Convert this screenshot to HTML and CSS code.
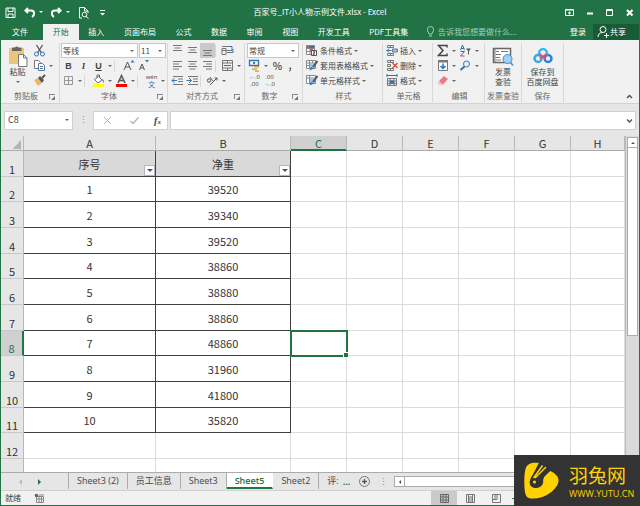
FILE: index.html
```html
<!DOCTYPE html>
<html lang="zh-CN">
<head>
<meta charset="utf-8">
<title>百家号_IT小人物示例文件.xlsx - Excel</title>
<link rel="stylesheet" href="styles.css">
</head>
<body>
<header class="titlebar">
  <div class="quick">
    <button aria-label="保存"><svg class="ic" viewBox="0 0 15 15"><path d="M3 3h9v9.500H3zM5 3v3.500h5V3M5 12.500V9h5v3.500" class="w"/></svg></button>
    <button aria-label="撤消"><svg class="ic" viewBox="0 0 15 15"><path d="M6 3 3.500 5.500 6 8M3.500 5.500h5.500c4 0 4 4.500 1 6.500" class="w b"/></svg><i class="arr"></i></button>
    <button aria-label="恢复"><svg class="ic" viewBox="0 0 15 15"><path d="M9 3l2.500 2.500L9 8M11.500 5.500H6c-4 0-4 4.500-1 6.500" class="w b"/></svg><i class="arr"></i></button>
    <button aria-label="打印预览"><svg class="ic" viewBox="0 0 15 15"><path d="M6 13H3.500V2.500h5L12 6v2M8.500 2.500V6H12M10 11.500l2.500 2" class="w"/><circle cx="8.500" cy="9.500" r="2.300" class="w"/></svg></button>
    <button aria-label="自定义"><svg class="ic" viewBox="0 0 15 15"><path d="M5 5.500h5" class="w"/><path d="M5 8h5L7.500 10.500z" fill="#fff"/></svg></button>
  </div>
  <h1>百家号_IT小人物示例文件.xlsx - Excel</h1>
  <div class="winbtns">
    <button aria-label="功能区选项"><svg class="ic" viewBox="0 0 15 15"><path d="M3.500 4.500h8v6h-8zM3.500 5h8M7.500 9.500v-3M6 8h3" class="w"/></svg></button>
    <button aria-label="最小化"><svg class="ic" viewBox="0 0 15 15"><path d="M5 8.500h6" class="w b"/></svg></button>
    <button aria-label="最大化"><svg class="ic" viewBox="0 0 15 15"><path d="M4.500 4.500h6v6h-6zM4.500 5.500h6" class="w"/></svg></button>
    <button aria-label="关闭"><svg class="ic" viewBox="0 0 15 15"><path d="M5 5l5.500 5.500M10.500 5 5 10.500" class="w b"/></svg></button>
  </div>
</header>

<div class="tabs">
  <a href="#" class="file">文件</a>
  <nav>
    <a href="#" class="on">开始</a><a href="#">插入</a><a href="#">页面布局</a><a href="#">公式</a><a href="#">数据</a><a href="#">审阅</a><a href="#">视图</a><a href="#">开发工具</a><a href="#">PDF工具集</a>
  </nav>
  <label class="tell"><svg class="ic" viewBox="0 0 15 15"><path d="M6 10C6 8.500 4.500 8 4.500 5.500a3 3 0 0 1 6 0C10.500 8 9 8.500 9 10zM6 12h3" stroke="#a9cdb8" fill="none"/></svg><input type="text" placeholder="告诉我您想要做什么..."></label>
  <a href="#" class="login">登录</a>
  <button class="share"><svg class="ic" viewBox="0 0 15 15"><circle cx="8" cy="5.500" r="3" class="w"/><path d="M3 13c0-3 2-4.500 4.500-4.500M11.500 9v5M9 11.500h5" class="w"/></svg>共享</button>
</div>

<main class="ribbon">
  <section class="group clip">
    <div class="body">
      <button class="big"><svg width="20" height="22" viewBox="0 0 20 22"><path d="M1 3h15v16H1z" fill="#ecc57c"/><path d="M4 2.500h3a2 2 0 0 1 3.500 0h3V6H4z" fill="#666"/><path d="M10.500 9.500h5l3.500 3.500v8.500h-8.500zM15.500 9.500V13H19" fill="#fff" stroke="#777"/></svg><span>粘贴</span><i class="arr"></i></button>
      <div class="rows">
        <div><button class="t" aria-label="剪切"><svg class="ic" viewBox="0 0 15 15"><path d="M4.500 2l5 8M10.500 2l-5 8" stroke="#555" stroke-width="1.300" fill="none"/><circle cx="4.500" cy="11" r="2" class="bl"/><circle cx="10.500" cy="11" r="2" class="bl"/></svg></button></div>
        <div><button class="t" aria-label="复制"><svg class="ic" viewBox="0 0 15 15"><path d="M2.500 2.500h4l2 2v6h-6z" fill="#fff" stroke="#777"/><path d="M6.500 5.500h4l2 2v5h-6zM8 8.500h3M8 10.500h3" fill="#fff" stroke="#57799e"/></svg></button><i class="arr"></i></div>
        <div><button class="t" aria-label="格式刷"><svg class="ic" viewBox="0 0 15 15"><path d="M2 7l4-2 4 5-4 3z" fill="#ecb766"/><path d="M6 5l2-2 4 4-2 3z" fill="#555"/><path d="M10 5l3-3" stroke="#555" stroke-width="2"/></svg></button></div>
      </div>
    </div>
    <footer><span>剪贴板</span><button class="launch" aria-label="剪贴板设置"></button></footer>
  </section>

  <section class="group font">
    <div class="rows">
      <div class="selects"><span class="sel name"><select aria-label="字体"><option>等线</option></select></span><span class="sel size"><select aria-label="字号"><option>11</option></select></span></div>
      <div><button class="t"><b>B</b></button><button class="t"><em>I</em></button><button class="t"><u>U</u></button><i class="arr"></i><i class="sep"></i>
        <button class="t" aria-label="增大字号"><svg class="ic" viewBox="0 0 15 15"><path d="M3 12 6.500 4 10 12M4 9h5" class="g"/><path d="M9.500 4.500h4l-2-2.500z" fill="#2e75b6"/></svg></button><button class="t" aria-label="减小字号"><svg class="ic" viewBox="0 0 15 15"><path d="M3.500 12 6 6l2.500 6M4.500 10h3" class="g"/><path d="M9 2h4l-2 2.500z" fill="#2e75b6"/></svg></button></div>
      <div><button class="t" aria-label="边框"><svg class="ic" viewBox="0 0 15 15"><path d="M3.500 3.500h8v8h-8zM7.500 3.500v8M3.500 7.500h8" stroke="#999" fill="none"/></svg></button><i class="arr"></i><i class="sep"></i>
        <button class="t" aria-label="填充颜色"><svg class="ic" viewBox="0 0 15 15"><path d="M3.500 6.500l4-3 3.500 3.500-4 3zM6 5V2h2.500v3" fill="#fff" stroke="#666"/><path d="M11 6c2.500 1 2 3 1.500 4z" fill="#2e75b6"/><path d="M2 11h11v3H2z" fill="#ff0"/></svg></button><i class="arr"></i><button class="t" aria-label="字体颜色"><svg class="ic" viewBox="0 0 15 15"><path d="M4 10 7.500 2.500 11 10M5 7.500h5" class="g thick"/><path d="M2 11h11v3H2z" fill="red"/></svg></button><i class="arr"></i><i class="sep"></i>
        <button class="t pinyin"><span>wén</span><span>文</span></button><i class="arr"></i></div>
    </div>
    <footer><span>字体</span><button class="launch" aria-label="字体设置"></button></footer>
  </section>

  <section class="group align">
    <div class="rows">
      <div><button class="t" aria-label="顶端对齐"><svg class="ic" viewBox="0 0 15 15"><path d="M3 2.500h9M4.500 5h6M3 7.500h9" class="l"/></svg></button><button class="t" aria-label="垂直居中"><svg class="ic" viewBox="0 0 15 15"><path d="M3 4.500h9M4.500 7h6M3 9.500h9" class="l"/></svg></button><button class="t pressed" aria-label="底端对齐"><svg class="ic" viewBox="0 0 15 15"><path d="M3 7.500h9M4.500 10h6M3 12.500h9" class="l"/></svg></button><i class="sep"></i><button class="t" aria-label="自动换行"><svg class="ic" viewBox="0 0 15 15"><path d="M2 3.500h7M2 7.500h10M2 5.500h4v6H2zM7 9.500h3" stroke="#777" fill="none"/><path d="M9 3.500h3v4M10 9.500h3V6" class="bl"/></svg></button></div>
      <div><button class="t" aria-label="左对齐"><svg class="ic" viewBox="0 0 15 15"><path d="M3 3.500h9M3 6h6M3 8.500h9M3 11h6" class="l"/></svg></button><button class="t" aria-label="居中"><svg class="ic" viewBox="0 0 15 15"><path d="M3 3.500h9M4.500 6h6M3 8.500h9M4.500 11h6" class="l"/></svg></button><button class="t" aria-label="右对齐"><svg class="ic" viewBox="0 0 15 15"><path d="M3 3.500h9M6 6h6M3 8.500h9M6 11h6" class="l"/></svg></button><i class="sep"></i><button class="t" aria-label="合并后居中"><svg class="ic" viewBox="0 0 15 15"><path d="M2.500 2.500h10v10h-10zM2.500 5h10M2.500 10h10M7.500 2.500V5M7.500 10v2.500" stroke="#777" fill="none"/><path d="M4 7.500h7" class="bl"/></svg></button><i class="arr"></i></div>
      <div><button class="t" aria-label="减少缩进"><svg class="ic" viewBox="0 0 15 15"><path d="M3 3.500h10M8 6h5M8 8.500h5M3 11.500h10" class="l"/><path d="M7 7.500H2M4.500 5 2 7.500 4.500 10" class="bl"/></svg></button><button class="t" aria-label="增加缩进"><svg class="ic" viewBox="0 0 15 15"><path d="M3 3.500h10M8 6h5M8 8.500h5M3 11.500h10" class="l"/><path d="M1.500 7.500h5M4 5l2.500 2.500L4 10" class="bl"/></svg></button><i class="sep"></i><button class="t" aria-label="方向"><svg class="ic" viewBox="0 0 15 15"><path d="M5 12l7-7M9.500 5H12v2.500" class="g"/><circle cx="4" cy="7.500" r="1.700" class="g"/><path d="M5 4l3 4" class="g"/></svg></button><i class="arr"></i></div>
    </div>
    <footer><span>对齐方式</span><button class="launch" aria-label="对齐设置"></button></footer>
  </section>

  <section class="group number">
    <div class="rows">
      <div class="selects"><span class="sel fmt"><select aria-label="数字格式"><option>常规</option></select></span></div>
      <div><button class="t" aria-label="会计格式"><svg class="ic" viewBox="0 0 15 15"><path d="M2.500 2.500h9v5h-9z" fill="#fff" stroke="#2e75b6" stroke-width="1.300"/><circle cx="7" cy="5" r="1.200" fill="#2e75b6"/><path d="M7 8h5v1.500H7zM5 10.500h5V12H5zM8 12.500h4V14H8z" fill="#e8a33d"/></svg></button><i class="arr"></i><button class="t pct">%</button><button class="t pct">，</button></div>
      <div><button class="t dec"><span><b>←</b>.0</span><span>.00</span></button><button class="t dec"><span>.00</span><span><b>→</b>.0</span></button></div>
    </div>
    <footer><span>数字</span><button class="launch" aria-label="数字设置"></button></footer>
  </section>

  <section class="group style">
    <div class="rows">
      <button class="row"><svg class="ic" viewBox="0 0 15 15"><path d="M1.500 2.500h8v9h-8zM1.500 5.500h8M1.500 8.500h8M5 2.500v9" fill="#fff" stroke="#888"/><path d="M2 3h3v2H2zM5 6h3v2H5z" fill="#d9532c"/><path d="M5 3h4v2H5z" fill="#2e75b6"/><path d="M6.500 7.500h5v5h-5zM8 9h2M8 11h2M10 8l-2 4" fill="#fff" stroke="#555"/></svg>条件格式<i class="arr"></i></button>
      <button class="row"><svg class="ic" viewBox="0 0 15 15"><path d="M1.500 2.500h9v8h-9zM1.500 5h9M1.500 7.500h9M4.500 2.500v8M7.500 2.500v8" fill="#fff" stroke="#888"/><path d="M5 5h5v5H5z" fill="#9dc3e6"/><path d="M12.500 3 8 9" stroke="#555" stroke-width="2"/><path d="M4.500 12.500 6 9l3 1.500z" fill="#2e75b6"/></svg>套用表格格式<i class="arr"></i></button>
      <button class="row"><svg class="ic" viewBox="0 0 15 15"><path d="M1.500 2.500h9v8h-9zM1.500 5h9M4.500 2.500v8" fill="#fff" stroke="#888"/><path d="M5 5.500h5v4.500H5z" fill="#9dc3e6"/><path d="M12.500 3 8 9" stroke="#555" stroke-width="2"/><path d="M4.500 12.500 6 9l3 1.500z" fill="#2e75b6"/></svg>单元格样式<i class="arr"></i></button>
    </div>
    <footer><span>样式</span></footer>
  </section>

  <section class="group cells">
    <div class="rows">
      <button class="row"><svg class="ic" viewBox="0 0 15 15"><path d="M2.500 2.500h6v2h-6zM2.500 10.500h6v2h-6zM5.500 2.500v2M5.500 10.500v2" stroke="#777" fill="none"/><path d="M7.500 6h5v3h-5z" fill="#9dc3e6" stroke="#777"/><path d="M6.500 7.500h-5M4 5.500 2 7.500l2 2" class="bl"/></svg>插入<i class="arr"></i></button>
      <button class="row"><svg class="ic" viewBox="0 0 15 15"><path d="M2.500 2.500h6v2h-6zM2.500 10.500h6v2h-6zM2.500 6.500h3v2h-3zM5.500 2.500v2M5.500 10.500v2" stroke="#777" fill="none"/><path d="M7.500 5l5 5M12.500 5l-5 5" stroke="#e0492f" stroke-width="1.400"/></svg>删除<i class="arr"></i></button>
      <button class="row"><svg class="ic" viewBox="0 0 15 15"><path d="M2 2.500h10M2 1v3M12 1v3" class="bl"/><path d="M2.500 5.500h9v7h-9zM2.500 8h9M2.500 10.500h9M5 5.500v7M9 5.500v7" stroke="#777" fill="none"/><path d="M5 7.500h4V11H5z" fill="#2e75b6"/></svg>格式<i class="arr"></i></button>
    </div>
    <footer><span>单元格</span></footer>
  </section>

  <section class="group edit">
    <div class="rows">
      <div><button class="t" aria-label="自动求和"><svg class="ic" viewBox="0 0 15 15"><path d="M12 4.500v-2H3.500L8 7.500l-4.500 5H12v-2" stroke="#444" stroke-width="1.500" fill="none"/></svg></button><i class="arr"></i><button class="t" aria-label="排序和筛选"><svg class="ic" viewBox="0 0 15 15"><path d="M2.500 7 4.500 2l2 5M3 5.500h3" class="bl"/><path d="M2.500 8.500h4l-4 4.500h4" stroke="#8e44ad" fill="none"/><path d="M8 5.500h5L11 8v3.500H10V8z" fill="#555"/></svg></button><i class="arr"></i></div>
      <div><button class="t" aria-label="填充"><svg class="ic" viewBox="0 0 15 15"><path d="M3.500 2.500h9v10h-9z" fill="#fff" stroke="#777"/><path d="M3 2h10v2.500H3z" fill="#777"/><path d="M8 5.500v5M5.500 8 8 10.500 10.500 8" class="bl thick"/></svg></button><i class="arr"></i><button class="t" aria-label="查找和选择"><svg class="ic" viewBox="0 0 15 15"><circle cx="8.500" cy="6" r="3" class="bl"/><path d="M6.500 8.500 2.500 12" class="bl b"/></svg></button><i class="arr"></i></div>
      <div><button class="t" aria-label="清除"><svg class="ic" viewBox="0 0 15 15"><path d="M4 8l5-5 4 3-5 5.500H5.500z" fill="#e8788a"/><path d="M4 8l3.500 3-1 1H4L2.500 10z" fill="#f6c3cb"/></svg></button><i class="arr"></i></div>
    </div>
    <footer><span>编辑</span></footer>
  </section>

  <section class="group invoice">
    <button class="big"><svg width="22" height="22" viewBox="0 0 22 22"><path d="M1.500 3.500h17v14h-17z" fill="#fff" stroke="#666" stroke-width="1.500"/><path d="M4 6.500h3M9 6.500h7M4 9.500h5M4 12.500h4M4 15h5M3 3v15" stroke="#777"/><circle cx="15.500" cy="14" r="4.500" fill="#9fd0f5" stroke="#4a90c8"/><path d="M18.500 17.500 21 20.500" stroke="#4a90c8" stroke-width="1.500"/></svg><span>发票<br>查验</span></button>
    <footer><span>发票查验</span></footer>
  </section>
  <section class="group save">
    <button class="big"><svg width="22" height="22" viewBox="0 0 22 22"><g fill="none" stroke-width="2.500"><circle cx="6" cy="13.500" r="3.500" stroke="#38a7e8"/><circle cx="16" cy="13.500" r="3.500" stroke="#2d7fe0"/><path d="M7.500 10a4 4 0 1 1 7 0" stroke="#38b6e8"/><path d="M8 8.500c0 3 3 2 6 5M14 8.500c0 3-3 2-6 5" stroke="#ec4a63" stroke-width="2"/></g></svg><span>保存到<br>百度网盘</span></button>
    <footer><span>保存</span></footer>
  </section>
  <button class="collapse" aria-label="折叠功能区"><svg class="ic" viewBox="0 0 15 15"><path d="M5 9l2.500-2.500L10 9" class="g thick"/></svg></button>
</main>

<div class="formula">
  <span class="sel namebox"><select aria-label="名称框"><option>C8</option></select></span>
  <span class="dots">⋮</span>
  <div class="fx">
    <button aria-label="取消"><svg class="ic" viewBox="0 0 15 15"><path d="M4 4l7 7M11 4l-7 7" stroke="#b5b5b5" fill="none"/></svg></button>
    <button aria-label="输入"><svg class="ic" viewBox="0 0 15 15"><path d="M3.500 8 6 10.500 11.500 4.500" stroke="#b5b5b5" stroke-width="1.400" fill="none"/></svg></button>
    <button aria-label="插入函数"><em>f<small>x</small></em></button>
  </div>
  <label class="entry"><input type="text" aria-label="编辑栏"><svg class="ic" viewBox="0 0 15 15"><path d="M5 6.500 7.500 9 10 6.500" stroke="#555" stroke-width="1.500" fill="none"/></svg></label>
</div>

<div class="sheet">
  <div class="grid">
    <table>
      <colgroup><col class="c0"><col class="ca"><col class="cb"><col class="cn"><col class="cn"><col class="cn"><col class="cn"><col class="cn"><col></colgroup>
      <thead><tr><th class="corner"></th><th>A</th><th>B</th><th class="on">C</th><th>D</th><th>E</th><th>F</th><th>G</th><th>H</th></tr></thead>
      <tbody>
        <tr class="head"><th>1</th><td class="d">序号<button class="filter" aria-label="筛选序号"></button></td><td class="d">净重<button class="filter" aria-label="筛选净重"></button></td><td></td><td></td><td></td><td></td><td></td><td></td></tr>
        <tr><th>2</th><td class="d">1</td><td class="d">39520</td><td></td><td></td><td></td><td></td><td></td><td></td></tr>
        <tr><th>3</th><td class="d">2</td><td class="d">39340</td><td></td><td></td><td></td><td></td><td></td><td></td></tr>
        <tr><th>4</th><td class="d">3</td><td class="d">39520</td><td></td><td></td><td></td><td></td><td></td><td></td></tr>
        <tr><th>5</th><td class="d">4</td><td class="d">38860</td><td></td><td></td><td></td><td></td><td></td><td></td></tr>
        <tr><th>6</th><td class="d">5</td><td class="d">38880</td><td></td><td></td><td></td><td></td><td></td><td></td></tr>
        <tr><th>7</th><td class="d">6</td><td class="d">38860</td><td></td><td></td><td></td><td></td><td></td><td></td></tr>
        <tr><th class="on">8</th><td class="d">7</td><td class="d">48860</td><td class="active"><i></i></td><td></td><td></td><td></td><td></td><td></td></tr>
        <tr><th>9</th><td class="d">8</td><td class="d">31960</td><td></td><td></td><td></td><td></td><td></td><td></td></tr>
        <tr><th>10</th><td class="d">9</td><td class="d">41800</td><td></td><td></td><td></td><td></td><td></td><td></td></tr>
        <tr><th>11</th><td class="d">10</td><td class="d">35820</td><td></td><td></td><td></td><td></td><td></td><td></td></tr>
        <tr><th>12</th><td></td><td></td><td></td><td></td><td></td><td></td><td></td><td></td></tr>
        <tr><th></th><td></td><td></td><td></td><td></td><td></td><td></td><td></td><td></td></tr>
      </tbody>
    </table>
  </div>
  <div class="vscroll"><button class="up" aria-label="向上滚动"></button><div class="thumb"></div></div>
</div>

<div class="sheettabs">
  <button class="prev" aria-label="上一个"></button><button class="next" aria-label="下一个"></button>
  <nav><a href="#">Sheet3 (2)</a><a href="#">员工信息</a><a href="#">Sheet3</a><a href="#" class="on">Sheet5</a><a href="#">Sheet2</a><a href="#" class="last">评:</a></nav>
  <span class="more">...</span>
  <button class="add" aria-label="新工作表"><svg class="ic" viewBox="0 0 15 15"><circle cx="7.500" cy="7.500" r="5" stroke="#777" fill="none"/><path d="M7.500 5v5M5 7.500h5" stroke="#555" stroke-width="1.300"/></svg></button>
  <span class="dots">⋮</span>
  <div class="hscroll"><button aria-label="向左滚动"></button><div></div></div>
</div>
<footer class="status">
  <span>就绪</span>
  <button aria-label="录制宏"><svg class="ic" viewBox="0 0 15 15"><path d="M4.500 5.500h7v6h-7zM4.500 8h7M7 5.500v6M9.500 5.500v6M7 4h5" stroke="#888" fill="none"/><circle cx="4.500" cy="4.500" r="1.800" fill="#666"/></svg></button>
  <div class="views">
    <button class="on" aria-label="普通"><svg class="ic" viewBox="0 0 15 15"><path d="M3.500 3.500h8v8h-8zM3.500 6h8M3.500 9h8M6 3.500v8M9 3.500v8" stroke="#666" fill="none"/></svg></button>
    <button aria-label="页面布局"><svg class="ic" viewBox="0 0 15 15"><path d="M3.500 3.500h8v8h-8zM5.500 4v7M9.500 4v7M6 6h3M6 8h3M6 10h3" stroke="#777" fill="none"/></svg></button>
    <button aria-label="分页预览"><svg class="ic" viewBox="0 0 15 15"><path d="M3.500 3.500h8v8h-8zM3.500 8.500H8v-5M6 4v4" stroke="#777" fill="none"/></svg></button>
    <button aria-label="缩小"><svg class="ic" viewBox="0 0 15 15"><path d="M3 7.500h5" class="g"/></svg></button>
  </div>
</footer>

<aside class="brand">
  <svg width="36" height="38" viewBox="0 0 36 38"><path d="M15 1C9 0 3 1 1.500 7 0 13 0 22 1 30c1 6 4 7 9 6.500C19 36 27 32 32 25c4-5 3-10-1-13-2-2-3-2-5-3l-4 4c-4 3-2 6-4 9-2 4-8 5-11 2-3-4 0-9 3-12z" fill="#ffd200"/><path d="M15 1 8 14 6 19c-1 4 2 7 6 7 5 0 8-4 7-8 0-3 2-5 7-9L23 3z" fill="#333"/><path d="M18.500 3.500 9.500 16M22 5 11 16" stroke="#ffd200" stroke-width="1.500"/><circle cx="10.500" cy="20" r="1.600" fill="#ffd200"/></svg>
  <div><strong>羽兔网</strong><span>WWW.YUTU.CN</span></div>
</aside>
</body>
</html>
```
FILE: styles.css
```css
* { box-sizing: border-box; }
body {
  margin: 0;
  height: 100vh;
  display: flex;
  flex-direction: column;
  overflow: hidden;
  border: 1px solid #217346;
  border-top: 0;
  background: #e6e6e6;
  color: #444;
  font: 8px/10px "Noto Sans CJK SC", sans-serif;
}
button, select, input { font: inherit; color: inherit; background: none; border: 0; padding: 0; margin: 0; outline: 0; }
a { color: inherit; text-decoration: none; }
i { font-style: normal; }
.ic { width: 15px; height: 15px; display: block; flex: none; }
.w { fill: none; stroke: #fff; stroke-width: 1; }
.g { fill: none; stroke: #555; stroke-width: 1; }
.l { fill: none; stroke: #777; stroke-width: 1; }
.bl { fill: none; stroke: #2e75b6; stroke-width: 1; }
.b { stroke-width: 2; }
.thick { stroke-width: 1.5; }
.arr { width: 8px; flex: none; display: flex; justify-content: center; }
.arr::before, .sel::after { content: ""; border: 2px solid transparent; border-top-color: #666; border-bottom: 0; }

.titlebar { height: 24px; flex: none; background: #217346; color: #fff; display: grid; grid-template-columns: 1fr auto 1fr; align-items: center; }
.titlebar h1 { margin: 0; font-size: 8px; font-weight: 400; }
.titlebar button { display: flex; align-items: center; }
.titlebar .arr::before { border-top-color: #fff; }
.quick { display: flex; gap: 4px; padding-left: 2px; }
.winbtns { display: flex; justify-content: flex-end; gap: 5px; padding-right: 2px; }

.tabs { height: 16px; flex: none; background: #217346; color: #fff; display: flex; align-items: stretch; line-height: 15px; }
.tabs .file { width: 42px; padding-left: 11px; }
.tabs nav { display: flex; width: 375px; }
.tabs nav a { flex: 1 0 auto; padding: 0 9px; text-align: center; white-space: nowrap; }
.tabs nav .on { background: #f1f1f1; color: #217346; }
.tell { display: flex; flex: 1; min-width: 0; padding-left: 5px; color: #a9cdb8; }
.tell input { flex: 1; min-width: 0; height: 15px; }
.tell input::placeholder { color: #a9cdb8; opacity: 1; }
.login { padding: 0 7px; }
.share { display: flex; width: 46px; background: #185c37; padding-left: 2px; }

.ribbon { height: 64px; flex: none; display: flex; background: #f1f1f1; border-bottom: 1px solid #d2d2d2; padding: 3px 0 1px; position: relative; }
.group { flex: none; display: flex; flex-direction: column; justify-content: space-between; border-right: 1px solid #d8d8d8; padding-left: 2px; }
.group footer { display: flex; height: 12px; align-items: center; color: #666; white-space: nowrap; }
.group footer span { flex: 1; text-align: center; }
.clip { width: 59px; }
.font { width: 108px; padding-left: 1px; }
.align { width: 77px; }
.number { width: 58px; }
.style { width: 80px; }
.cells { width: 50px; }
.edit { width: 52px; }
.invoice { width: 37px; padding: 0; }
.save { width: 42px; padding: 0; }
.body { display: flex; }
.rows > * { display: flex; height: 15px; align-items: center; white-space: nowrap; }
.t { width: 15px; height: 15px; flex: none; display: flex; align-items: center; justify-content: center; font-size: 9px; }
.t b, .t em, .t u { font: bold 9px "Liberation Sans", sans-serif; }
.t em { font-family: "Liberation Serif", serif; font-style: italic; }
.pressed { background: #cacaca; }
.sep { width: 5px; height: 12px; border-left: 1px solid #d8d8d8; }
.font .sep { width: 7px; }
.pct { font-size: 10px; font-weight: 500; }
.pinyin, .dec { flex-direction: column; font: 6px/7px "Open Sans", "Noto Sans CJK SC", sans-serif; }
.pinyin span:last-child { color: #2e75b6; font-size: 7px; }
.dec b { font-size: 6px; line-height: 6px; color: #2e75b6; }
.big { width: 100%; display: flex; flex-direction: column; align-items: center; padding-top: 2px; }
.clip .big { width: 29px; }
.clip .arr { margin-top: 4px; }
.clip .rows .arr { margin-top: 0; }
.launch { width: 6px; height: 5px; margin-right: 4px; border: 1px solid #888; border-right: 0; border-bottom: 0; position: relative; }
.launch::after { content: ""; position: absolute; right: 0; bottom: -1px; border: 2px solid transparent; border-right-color: #777; border-bottom-color: #777; }
.collapse { position: absolute; right: 2px; bottom: -1px; }
.sel { position: relative; display: flex; background: #fff; border: 1px solid #c6c6c6; height: 15px; }
.sel select { appearance: none; width: 100%; padding-left: 1px; }
.sel::after { position: absolute; right: 3px; top: 6px; pointer-events: none; }
.selects { gap: 1px; }
.name { width: 77px; }
.size { width: 27px; }
.fmt { width: 52px; }

.formula { height: 32px; flex: none; display: flex; align-items: center; padding: 0 3px; }
.formula > .sel, .fx, .entry { height: 19px; background: #fff; border: 1px solid #d0d0d0; }
.namebox { width: 69px; font-size: 9px; }
.formula .sel select { padding-left: 3px; }
.formula .sel::after { top: 7px; }
.dots { width: 20px; text-align: center; font-size: 9px; color: #888; }
.fx { width: 75px; display: flex; align-items: center; justify-content: space-around; margin-right: 2px; }
.fx em { font: italic bold 10px "Liberation Serif", serif; }
.fx small { font-size: 7px; }
.entry { flex: 1; display: flex; align-items: center; }
.entry input { flex: 1; min-width: 0; }
.entry .ic { margin-right: -2px; }

.sheet { flex: 1; min-height: 0; display: flex; overflow: hidden; }
.grid { flex: 1; overflow: hidden; background: #fff; border-right: 1px solid #bbb; }
table { width: 100%; table-layout: fixed; border-collapse: separate; border-spacing: 0; font-size: 11px; line-height: 14px; color: #333; }
.c0 { width: 23px; }
.ca { width: 132px; }
.cb { width: 135px; }
.cn { width: 56px; }
th { padding: 0; font-weight: 400; background: #e6e6e6; border-right: 1px solid #b8b8b8; border-bottom: 1px solid #c8c8c8; }
thead th { height: 15px; border-bottom-color: #ababab; }
thead .on { background: #d0d0d0; color: #217346; border-bottom-color: #217346; box-shadow: inset 0 -1px #217346; }
.corner { background: linear-gradient(135deg, transparent 50%, #b4b4b4 50%) 11px 4px / 9px 9px no-repeat #e6e6e6; }
tbody tr { height: 26px; }
tbody tr:nth-child(3n+2) { height: 25px; }
tbody th { vertical-align: bottom; }
tbody .on { background: #d0d0d0; color: #217346; border-right: 2px solid #217346; }
td { padding: 0; position: relative; text-align: center; border-right: 1px solid #dcdcdc; border-bottom: 1px solid #dcdcdc; }
.d { border-color: #404040; }
.head .d { background: #d9d9d9; }
.filter { position: absolute; right: 0; bottom: 0; width: 11px; height: 11px; background: #fdfdfd; border: 1px solid #b5b5c5; }
.filter::after { content: ""; position: absolute; left: 2px; top: 3px; border: 3px solid transparent; border-top-color: #555; border-bottom: 0; }
.active { outline: 2px solid #217346; outline-offset: -1px; z-index: 1; }
.active i { position: absolute; right: -2px; bottom: -2px; width: 4px; height: 4px; background: #217346; border: 1px solid #fff; border-width: 1px 0 0 1px; box-sizing: content-box; }
.vscroll { width: 13px; flex: none; display: flex; flex-direction: column; padding: 1px 1px 0; background: #dadada; }
.up, .thumb { background: #fff; border: 1px solid #ababab; }
.up { height: 11px; flex: none; display: flex; align-items: center; justify-content: center; }
.up::after { content: ""; border: 2px solid transparent; border-bottom-color: #555; border-top: 0; }
.thumb { height: 56%; border-top: 0; }

.sheettabs { height: 18px; flex: none; display: flex; align-items: center; border-top: 1px solid #ababab; font: 9px/15px "Open Sans", "Noto Sans CJK SC", sans-serif; }
.prev, .next { width: 19px; height: 15px; display: flex; align-items: center; justify-content: center; }
.prev { margin-left: 10px; }
.prev::after, .next::after { content: ""; border: 3px solid transparent; }
.prev::after { border-right-color: #bbb; border-left: 0; }
.next::after { border-left-color: #217346; border-right: 0; }
.sheettabs nav { display: flex; align-self: flex-start; margin-left: 19px; border-left: 1px solid #ababab; }
.sheettabs nav a { padding: 0 8px; height: 16px; border-right: 1px solid #ababab; white-space: nowrap; }
.sheettabs nav .on { background: #fff; color: #217346; font-weight: 600; border-bottom: 2px solid #217346; border-right-color: #fff; }
.sheettabs nav .last { padding-right: 0; border: 0; }
.more { color: #217346; font-weight: 700; margin: 0 7px 0 4px; }
.sheettabs .dots { width: 22px; }
.hscroll { flex: 1; display: flex; height: 11px; background: #fff; border: 1px solid #ababab; margin-right: 4px; }
.hscroll button { width: 10px; border-right: 1px solid #ababab; display: flex; align-items: center; justify-content: center; }
.hscroll button::after { content: ""; border: 2px solid transparent; border-right-color: #444; border-left: 0; }
.status { height: 15px; flex: none; display: flex; align-items: center; gap: 11px; padding-left: 4px; background: #f1f1f1; border-top: 1px solid #d0d0d0; }
.views { display: flex; margin-left: auto; margin-right: 116px; align-self: stretch; }
.views button { width: 26px; display: flex; align-items: center; justify-content: center; }
.views button:last-child { width: 14px; }
.views .on { background: #cacaca; }

.brand { position: fixed; right: 0; bottom: 0; z-index: 2; width: 126px; height: 51px; display: flex; align-items: center; gap: 9px; padding-left: 10px; background: #333; color: #ffd200; }
.brand div { display: flex; flex-direction: column; }
.brand strong { font-size: 19px; line-height: 25px; font-weight: 400; }
.brand span { font: 9px/13px "Open Sans", sans-serif; }
```
